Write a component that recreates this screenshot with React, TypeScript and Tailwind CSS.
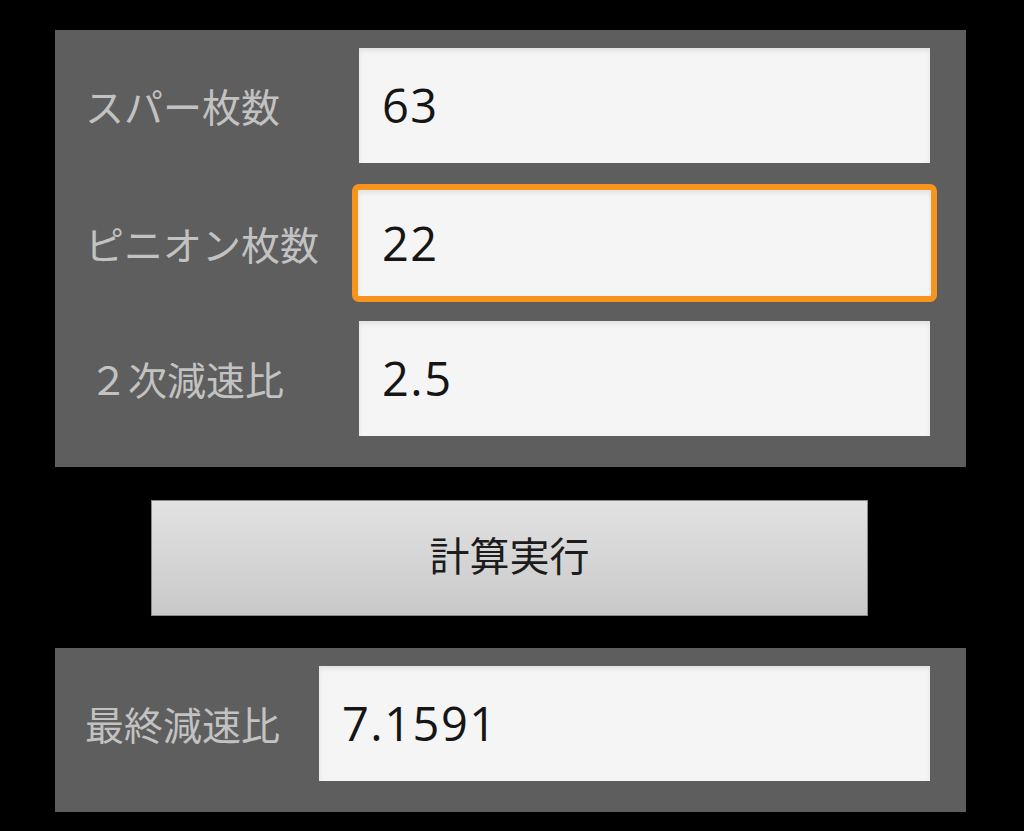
import React from 'react';

// Gear ratio calculator (Android style form)
const FONT = "font-['Roboto','Noto_Sans_CJK_JP',sans-serif]";
const DIGITS = "font-['Open_Sans','Noto_Sans_CJK_JP',sans-serif]";

const Field: React.FC<{ value: string; focused?: boolean; className?: string }> = ({
  value,
  focused,
  className = '',
}) => {
  if (focused) {
    return (
      <div
        className={`h-[118px] rounded-[7px] border-[6px] border-[#f7941e] bg-[#f5f5f5] shadow-[inset_0_3px_5px_rgba(0,0,0,0.08)] flex items-center pl-[24px] ${className}`}
      >
        <span className={`text-[47px] leading-none tracking-[1.5px] text-[#151515] ${DIGITS}`}>{value}</span>
      </div>
    );
  }
  return (
    <div
      className={`h-[115px] bg-[#f5f5f5] shadow-[inset_0_3px_5px_rgba(0,0,0,0.08)] flex items-center pl-[23px] ${className}`}
    >
      <span className={`text-[47px] leading-none tracking-[1.5px] text-[#151515] ${DIGITS}`}>{value}</span>
    </div>
  );
};

const Label: React.FC<{ text: string; className?: string }> = ({ text, className = '' }) => (
  <div className={`text-[39px] leading-none text-[#c2c2c2] pt-[8px] ${className}`}>{text}</div>
);

export default function App() {
  return (
    <div className={`w-[1024px] h-[831px] bg-black overflow-hidden ${FONT}`}>
      {/* input panel */}
      <div className="ml-[55px] mt-[30px] w-[911px] h-[437px] bg-[#5e5e5e] pt-[18px] pl-[30px] pr-[36px] flex flex-col">
        <div className="flex items-center h-[115px]">
          <Label text="スパー枚数" className="w-[274px]" />
          <Field value="63" className="flex-1" />
        </div>
        <div className="flex items-center h-[118px] mt-[21px]">
          <Label text="ピニオン枚数" className="w-[267px]" />
          <Field value="22" focused className="flex-1 -mr-[7px]" />
        </div>
        <div className="flex items-center h-[115px] mt-[19px]">
          <Label text="２次減速比" className="w-[274px] pl-[4px]" />
          <Field value="2.5" className="flex-1" />
        </div>
      </div>

      {/* calculate button */}
      <button className="block ml-[151px] mt-[33px] w-[717px] h-[116px] border border-[#8a8a8a] bg-gradient-to-b from-[#e2e2e2] to-[#c9c9c9] text-[40px] leading-none text-[#1c1c1c]">
        計算実行
      </button>

      {/* result panel */}
      <div className="ml-[55px] mt-[32px] w-[911px] h-[164px] bg-[#5e5e5e] pt-[18px] pl-[30px] pr-[36px]">
        <div className="flex items-center h-[115px]">
          <Label text="最終減速比" className="w-[234px]" />
          <Field value="7.1591" className="flex-1" />
        </div>
      </div>
    </div>
  );
}
